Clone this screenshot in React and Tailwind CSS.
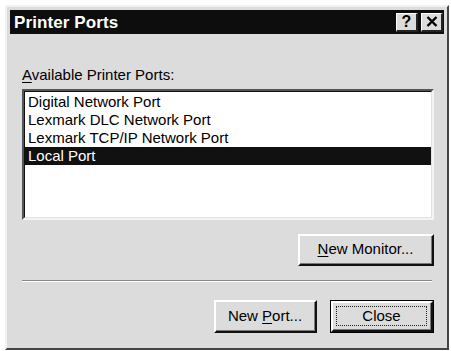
import React from 'react';

const ports = [
  'Digital Network Port',
  'Lexmark DLC Network Port',
  'Lexmark TCP/IP Network Port',
  'Local Port',
];

// Win9x style raised button
const Button = ({ children, className = '', isDefault = false }) => (
  <div
    className={`flex items-center justify-center bg-[#dcdcdc] ${
      isDefault ? 'border border-black' : ''
    } ${className}`}
  >
    <div className="w-full h-full border-t-2 border-l-2 border-t-white border-l-white border-b-2 border-r-2 border-b-[#111] border-r-[#111] flex items-center justify-center">
      <div className="w-full h-full border-b border-r border-b-[#7a7a7a] border-r-[#7a7a7a] flex items-center justify-center p-[3px]">
        {isDefault ? (
          <div className="w-full h-full border border-dotted border-[#222] flex items-center justify-center">
            {children}
          </div>
        ) : (
          children
        )}
      </div>
    </div>
  </div>
);

const TitleButton = ({ children }) => (
  <div className="w-[22px] h-[19px] bg-[#dcdcdc] border-t border-l border-t-white border-l-white border-b-2 border-r-2 border-b-[#222] border-r-[#222] flex items-center justify-center">
    {children}
  </div>
);

export default function App() {
  return (
    <div
      className="w-[451px] h-[351px] bg-white pl-[5px] pt-[5px] text-black"
      style={{ fontFamily: '"Liberation Sans", Arial, sans-serif' }}
    >
      {/* window frame */}
      <div className="w-[444px] h-[345px] bg-[#dcdcdc] border-2 border-t-[#f2f2f2] border-l-[#f2f2f2] border-b-[#444] border-r-[#444] p-[3px] flex flex-col">
        {/* title bar */}
        <div className="h-[24px] bg-[#0d0d0d] flex items-center justify-between pl-[4px] pr-[1px]">
          <span className="text-white font-bold text-[17px] leading-none tracking-[0.1px]">Printer Ports</span>
          <div className="flex items-center gap-[3px]">
            <TitleButton>
              <span className="font-bold text-[16px] leading-none">?</span>
            </TitleButton>
            <TitleButton>
              <svg width="12" height="11" viewBox="0 0 12 11">
                <path d="M1.5 1 L10.5 10 M10.5 1 L1.5 10" stroke="#000" strokeWidth="2.4" />
              </svg>
            </TitleButton>
          </div>
        </div>

        {/* content */}
        <div className="flex flex-col pl-[12px] pr-[10px]">
          <div className="mt-[32px] text-[15px] leading-[17px]">
            <span className="underline underline-offset-2">A</span>vailable Printer Ports:
          </div>

          {/* list box */}
          <div className="mt-[6px] h-[131px] border-2 border-t-[#555] border-l-[#555] border-b-[#f4f4f4] border-r-[#f4f4f4]">
            <div className="h-full bg-white border-t border-l border-t-[#111] border-l-[#111] border-b border-r border-b-[#e2e2e2] border-r-[#e2e2e2] pt-[1px]">
              {ports.map((p, i) => (
                <div
                  key={p}
                  className={`h-[18px] pl-[3px] text-[15px] leading-[18px] ${
                    i === 3 ? 'bg-[#111] text-white' : ''
                  }`}
                >
                  {p}
                </div>
              ))}
            </div>
          </div>

          <div className="mt-[14px] flex justify-end">
            <Button className="w-[136px] h-[32px]">
              <span className="text-[15px]">
                <span className="underline underline-offset-2">N</span>ew Monitor...
              </span>
            </Button>
          </div>

          {/* etched separator */}
          <div className="mt-[14px] mr-[2px] border-t border-b border-t-[#8a8a8a] border-b-white" />

          <div className="mt-[18px] flex justify-end gap-[13px]">
            <Button className="w-[103px] h-[33px]">
              <span className="text-[15px]">
                New <span className="underline underline-offset-2">P</span>ort...
              </span>
            </Button>
            <Button className="w-[104px] h-[33px]" isDefault>
              <span className="text-[15px]">Close</span>
            </Button>
          </div>
        </div>
      </div>
    </div>
  );
}
